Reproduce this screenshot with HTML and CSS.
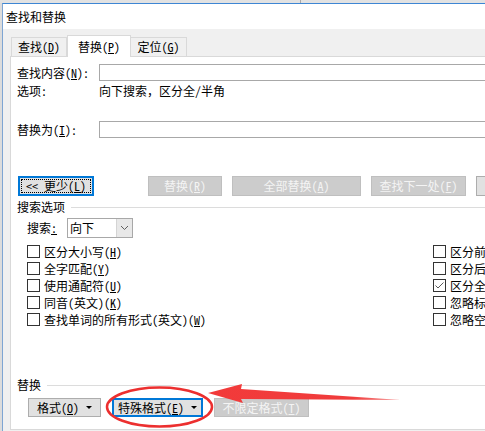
FILE: index.html
```html
<!DOCTYPE html>
<html lang="zh-CN">
<head>
<meta charset="utf-8">
<title>查找和替换</title>
<link rel="stylesheet" href="styles.css">
</head>
<body>
<div class="screen">
  <div class="topstrip"><div class="seg"></div></div>
  <div class="window">
    <div class="titlebar">查找和替换</div>
    <div class="dialog">
      <div class="tabs">
        <div class="tab t1">查找(<u>D</u>)</div>
        <div class="tab active">替换(<u>P</u>)</div>
        <div class="tab t3">定位(<u>G</u>)</div>
      </div>
      <div class="panel">
        <div class="field-row find">
          <span class="lbl">查找内容(<u>N</u>):</span>
          <div class="input"></div>
        </div>
        <div class="opts-row">
          <span class="lbl">选项:</span>
          <span>向下搜索，区分全/半角</span>
        </div>
        <div class="field-row replace">
          <span class="lbl">替换为(<u>I</u>):</span>
          <div class="input"></div>
        </div>
        <div class="btn-row main">
          <button class="btn focus w76"><span class="ring">&lt;&lt; 更少(<u>L</u>)</span></button>
          <button class="btn disabled w74 gap54">替换(<u>R</u>)</button>
          <button class="btn disabled w129">全部替换(<u>A</u>)</button>
          <button class="btn disabled w95">查找下一处(<u>F</u>)</button>
          <button class="btn w75">取消</button>
        </div>
        <div class="group-head search-head"><span>搜索选项</span></div>
        <div class="search-row">
          <span class="slbl">搜索<u>:</u></span>
          <div class="select">
            <span class="sval">向下</span>
            <span class="sarrow"><svg width="9" height="6" viewBox="0 0 9 6"><polyline points="1,1 4.5,4.5 8,1" fill="none" stroke="#606060" stroke-width="1"/></svg></span>
          </div>
        </div>
        <div class="checks">
          <div class="col left">
            <div class="cb-row"><span class="box"></span>区分大小写(<u>H</u>)</div>
            <div class="cb-row"><span class="box"></span>全字匹配(<u>Y</u>)</div>
            <div class="cb-row"><span class="box"></span>使用通配符(<u>U</u>)</div>
            <div class="cb-row"><span class="box"></span>同音(英文)(<u>K</u>)</div>
            <div class="cb-row"><span class="box"></span>查找单词的所有形式(英文)(<u>W</u>)</div>
          </div>
          <div class="col right">
            <div class="cb-row"><span class="box"></span>区分前缀(<u>X</u>)</div>
            <div class="cb-row"><span class="box"></span>区分后缀(<u>T</u>)</div>
            <div class="cb-row"><span class="box checked"><svg width="11" height="11" viewBox="0 0 11 11"><polyline points="1.5,5.5 4,8 9.5,2.5" fill="none" stroke="#5a5a5a" stroke-width="1"/></svg></span>区分全/半角(<u>M</u>)</div>
            <div class="cb-row"><span class="box"></span>忽略标点符号(<u>S</u>)</div>
            <div class="cb-row"><span class="box"></span>忽略空格(<u>W</u>)</div>
          </div>
        </div>
        <div class="group-head replace-head"><span>替换</span></div>
        <div class="btn-row bottom">
          <button class="btn w73">格式(<u>O</u>)<span class="caret"></span></button>
          <button class="btn focus2 w91">特殊格式(<u>E</u>)<span class="caret"></span></button>
          <button class="btn disabled w95">不限定格式(<u>T</u>)</button>
        </div>
      </div>
    </div>
  </div>
  <svg class="annot" width="485" height="431" viewBox="0 0 485 431">
    <defs>
      <linearGradient id="tail" x1="0" y1="0" x2="1" y2="0">
        <stop offset="0" stop-color="#f23a3a"/>
        <stop offset="0.75" stop-color="#f03c3c"/>
        <stop offset="1" stop-color="#f7a0a0"/>
      </linearGradient>
    </defs>
    <ellipse cx="159.5" cy="407" rx="52.5" ry="19.5" fill="none" stroke="#ec2f2f" stroke-width="2.5"/>
    <polygon points="208,393 242,384 241,389 401,400 241,399 243,403" fill="url(#tail)"/>
  </svg>
</div>
</body>
</html>
```

FILE: styles.css
```css
* { box-sizing: border-box; }
html, body { margin: 0; padding: 0; }
body {
  width: 485px;
  height: 431px;
  overflow: hidden;
  background: #dcdcdc;
  font-family: "Noto Sans Mono CJK SC", "Noto Sans CJK SC", sans-serif;
  font-size: 12px;
  color: #000;
}
u { text-decoration: underline; text-underline-offset: 1px; }

.screen { position: relative; width: 485px; height: 431px; overflow: hidden; }

.topstrip { height: 3px; display: flex; background: #e2e2e2; }
.topstrip .seg { width: 301px; border-right: 1px solid #a9a9a9; }

.window {
  margin-left: 2px;
  width: 640px;
  height: 428px;
  border-left: 1px solid #7ea5d3;
  border-top: 1px solid #3d86d4;
  background: #f0f0f0;
}
.titlebar {
  height: 25px;
  line-height: 25px;
  padding-left: 3px;
  background: #fff;
}

.dialog { padding: 6px 0 0 7px; }

.tabs { display: flex; align-items: flex-end; height: 21px; margin-left: 1px; }
.tab {
  height: 19px;
  line-height: 18px;
  text-align: center;
  border: 1px solid #d9d9d9;
  border-bottom: none;
  background: #f0f0f0;
}
.tab.t1 { width: 56px; }
.tab.t3 { width: 56px; border-left: none; }
.tab.active {
  width: 64px;
  height: 22px;
  line-height: 21px;
  margin-bottom: -1px;
  background: #fff;
  position: relative;
  z-index: 1;
}

.panel {
  width: 620px;
  height: 374px;
  border: 1px solid #d9d9d9;
  background: #fff;
  padding-left: 6px;
  display: flex;
  flex-direction: column;
}

.lbl { width: 82px; flex: none; }

.field-row { display: flex; height: 17px; line-height: 17px; }
.field-row.find { margin-top: 7px; }
.field-row.replace { margin-top: 22px; }
.input { flex: 1; border: 1px solid #a8a8a8; background: #fff; }

.opts-row { display: flex; height: 17px; line-height: 17px; margin-top: 1px; }

.btn-row { display: flex; }
.btn-row.main { margin-top: 38px; height: 20px; margin-left: 1px; }
.btn-row.bottom { margin-top: 6px; height: 19px; margin-left: 11px; gap: 11px; }
.btn-row.main .btn + .btn { margin-left: 10px; }
.btn-row.main .btn.gap54 { margin-left: 54px; }

.btn {
  height: 100%;
  margin: 0;
  padding: 0;
  font: inherit;
  color: #000;
  background: #e1e1e1;
  border: 1px solid #adadad;
  text-align: center;
  line-height: 16px;
  display: flex;
  align-items: center;
  justify-content: center;
}
.btn.disabled { background: #cccccc; border-color: #bfbfbf; color: #f4f4f4; }
.btn.focus { border: 2px solid #0078d7; padding: 1px; }
.btn.focus .ring {
  display: flex;
  align-items: center;
  justify-content: center;
  width: 100%;
  height: 100%;
  border: 1px dotted #000;
}
.btn.focus2 { border: 2px solid #0078d7; }
.w73 { width: 73px; }
.w74 { width: 74px; }
.w75 { width: 75px; }
.w76 { width: 76px; }
.w91 { width: 91px; }
.w95 { width: 95px; }
.w129 { width: 129px; }

.caret {
  width: 0;
  height: 0;
  margin-left: 7px;
  border-left: 3px solid transparent;
  border-right: 3px solid transparent;
  border-top: 3px solid #000;
}

.group-head { display: flex; align-items: center; height: 14px; line-height: 14px; }
.group-head::after { content: ""; flex: 1; height: 1px; background: #dcdcdc; margin-left: 6px; }
.search-head { margin-top: 4px; }
.replace-head { margin-top: 50px; }

.search-row { display: flex; height: 20px; margin-top: 4px; margin-left: 10px; }
.slbl { width: 40px; line-height: 20px; }
.select {
  width: 66px;
  height: 20px;
  display: flex;
  border: 1px solid #a8a8a8;
  background: #fff;
}
.sval { flex: 1; padding-left: 2px; line-height: 18px; }
.sarrow {
  width: 16px;
  display: flex;
  align-items: center;
  justify-content: center;
  background: #e8e8e8;
  border-left: 1px solid #d4d4d4;
}

.checks { display: flex; margin-top: 5px; margin-left: 10px; }
.col.left { width: 406px; }
.cb-row { display: flex; align-items: center; height: 17px; white-space: nowrap; }
.box {
  width: 13px;
  height: 13px;
  flex: none;
  border: 1px solid #333;
  background: #fff;
  margin-right: 4px;
  display: flex;
  align-items: center;
  justify-content: center;
}

.annot { position: absolute; left: 0; top: 0; pointer-events: none; }
```
